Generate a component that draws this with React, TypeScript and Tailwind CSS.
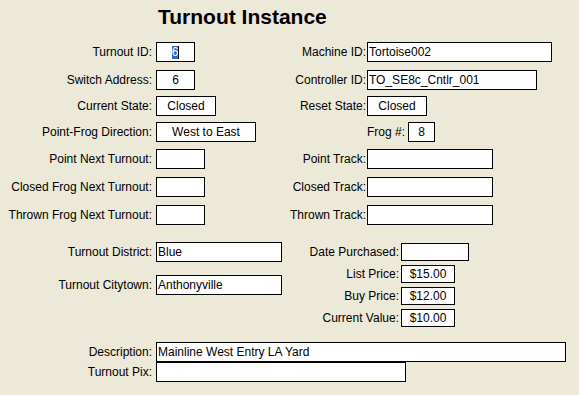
import React, { FC, ReactNode } from 'react';

// Access-style record form: "Turnout Instance"

type BoxProps = {
  w: string;
  h?: string;
  center?: boolean;
  children?: ReactNode;
};

const Box: FC<BoxProps> = ({ w, h = 'h-[20px]', center, children }) => (
  <div
    className={`${w} ${h} flex shrink-0 items-center overflow-hidden whitespace-nowrap border border-black bg-white leading-[16px] ${
      center ? 'justify-center' : 'justify-start pl-px'
    }`}
  >
    {children}
  </div>
);

const Label: FC<{ w: string; children?: ReactNode }> = ({ w, children }) => (
  <div className={`${w} shrink-0 whitespace-nowrap text-right leading-[20px]`}>{children}</div>
);

const App: FC = () => {
  return (
    <div className="h-[395px] w-[579px] overflow-hidden bg-[#ece9d8] font-['Liberation_Sans',Arial,sans-serif] text-[12px] text-black">
      <h1 className="pl-[158px] pt-[5px] text-[21px] font-bold leading-[24px]">Turnout Instance</h1>

      {/* top block: two columns of fields */}
      <div className="mt-[13px] flex h-[20px] items-center">
        <Label w="w-[152px]">Turnout ID:</Label>
        <div className="ml-[4px] w-[106px]">
          <Box w="w-[39px]" center>
            <span className="bg-[#316ac5] leading-[13px] text-white">6</span>
            <span className="inline-block h-[13px] w-px bg-black" />
          </Box>
        </div>
        <Label w="w-[104px]">Machine ID:</Label>
        <div className="ml-[1px]">
          <Box w="w-[185px]">Tortoise002</Box>
        </div>
      </div>

      <div className="mt-[8px] flex h-[20px] items-center">
        <Label w="w-[152px]">Switch Address:</Label>
        <div className="ml-[4px] w-[106px]">
          <Box w="w-[39px]" center>6</Box>
        </div>
        <Label w="w-[104px]">Controller ID:</Label>
        <div className="ml-[1px]">
          <Box w="w-[170px]">TO_SE8c_Cntlr_001</Box>
        </div>
      </div>

      <div className="mt-[6px] flex h-[20px] items-center">
        <Label w="w-[152px]">Current State:</Label>
        <div className="ml-[4px] w-[106px]">
          <Box w="w-[60px]" center>Closed</Box>
        </div>
        <Label w="w-[104px]">Reset State:</Label>
        <div className="ml-[1px]">
          <Box w="w-[60px]" center>Closed</Box>
        </div>
      </div>

      <div className="mt-[6px] flex h-[20px] items-center">
        <Label w="w-[152px]">Point-Frog Direction:</Label>
        <div className="ml-[4px] w-[106px]">
          <Box w="w-[100px]" center>West to East</Box>
        </div>
        <div className="w-[104px]" />
        <div className="ml-[1px] flex items-center">
          <span className="leading-[20px]">Frog #:</span>
          <div className="ml-[3px]">
            <Box w="w-[27px]" center>8</Box>
          </div>
        </div>
      </div>

      <div className="mt-[7px] flex h-[20px] items-center">
        <Label w="w-[152px]">Point Next Turnout:</Label>
        <div className="ml-[4px] w-[106px]">
          <Box w="w-[49px]" />
        </div>
        <Label w="w-[104px]">Point Track:</Label>
        <div className="ml-[1px]">
          <Box w="w-[126px]" />
        </div>
      </div>

      <div className="mt-[8px] flex h-[20px] items-center">
        <Label w="w-[152px]">Closed Frog Next Turnout:</Label>
        <div className="ml-[4px] w-[106px]">
          <Box w="w-[49px]" />
        </div>
        <Label w="w-[104px]">Closed Track:</Label>
        <div className="ml-[1px]">
          <Box w="w-[126px]" />
        </div>
      </div>

      <div className="mt-[8px] flex h-[20px] items-center">
        <Label w="w-[152px]">Thrown Frog Next Turnout:</Label>
        <div className="ml-[4px] w-[106px]">
          <Box w="w-[49px]" />
        </div>
        <Label w="w-[104px]">Thrown Track:</Label>
        <div className="ml-[1px]">
          <Box w="w-[126px]" />
        </div>
      </div>

      {/* middle block: location and purchase details */}
      <div className="mt-[17px] flex items-start">
        <div className="flex w-[282px] flex-col">
          <div className="flex h-[20px] items-center">
            <Label w="w-[152px]">Turnout District:</Label>
            <div className="ml-[4px]">
              <Box w="w-[126px]">Blue</Box>
            </div>
          </div>
          <div className="mt-[13px] flex h-[20px] items-center">
            <Label w="w-[152px]">Turnout Citytown:</Label>
            <div className="ml-[4px]">
              <Box w="w-[126px]">Anthonyville</Box>
            </div>
          </div>
        </div>

        <div className="flex flex-col gap-[4px] pt-px">
          <div className="flex h-[18px] items-center">
            <Label w="w-[117px]">Date Purchased:</Label>
            <div className="ml-[2px]">
              <Box w="w-[68px]" h="h-[18px]" />
            </div>
          </div>
          <div className="flex h-[18px] items-center">
            <Label w="w-[117px]">List Price:</Label>
            <div className="ml-[2px]">
              <Box w="w-[54px]" h="h-[18px]" center>$15.00</Box>
            </div>
          </div>
          <div className="flex h-[18px] items-center">
            <Label w="w-[117px]">Buy Price:</Label>
            <div className="ml-[2px]">
              <Box w="w-[54px]" h="h-[18px]" center>$12.00</Box>
            </div>
          </div>
          <div className="flex h-[18px] items-center">
            <Label w="w-[117px]">Current Value:</Label>
            <div className="ml-[2px]">
              <Box w="w-[54px]" h="h-[18px]" center>$10.00</Box>
            </div>
          </div>
        </div>
      </div>

      {/* bottom block */}
      <div className="mt-[15px] flex h-[20px] items-center">
        <Label w="w-[152px]">Description:</Label>
        <div className="ml-[4px]">
          <Box w="w-[410px]">Mainline West Entry LA Yard</Box>
        </div>
      </div>
      <div className="flex h-[20px] items-center">
        <Label w="w-[152px]">Turnout Pix:</Label>
        <div className="ml-[4px]">
          <Box w="w-[250px]" />
        </div>
      </div>
    </div>
  );
};

export default App;
